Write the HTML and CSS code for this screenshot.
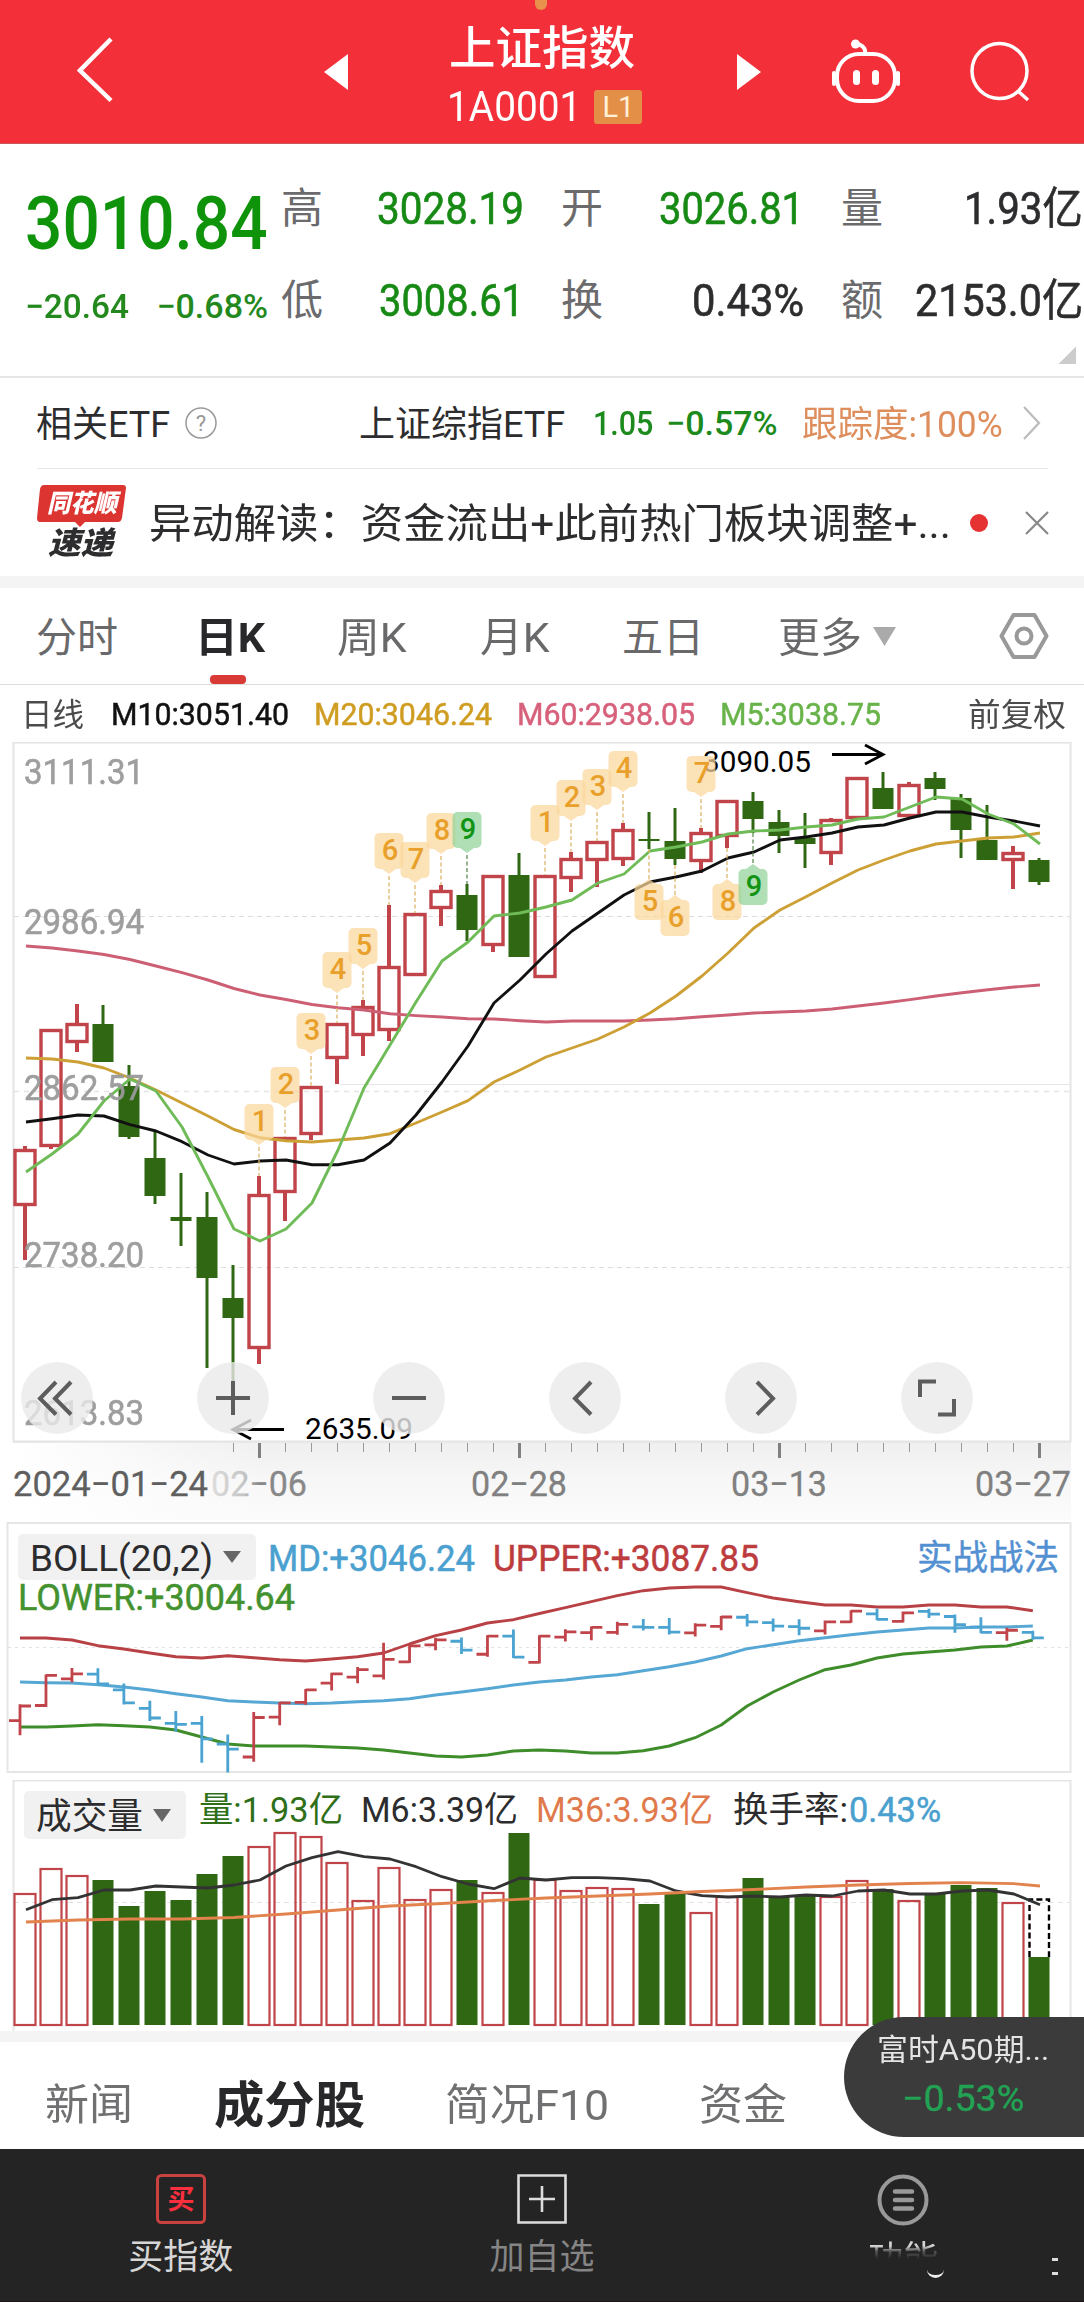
FILE: index.html
```html
<!DOCTYPE html>
<html lang="zh-CN">
<head>
<meta charset="utf-8">
<title>上证指数</title>
<link rel="stylesheet" href="styles.css">
</head>
<body>
<header class="top">
  <i class="drop"></i>
  <svg class="back" width="40" height="70" viewBox="0 0 40 70"><path d="M34 4 3 35.500l31 30" fill="none" stroke="#fff" stroke-width="4.500"/></svg>
  <svg width="24" height="36" viewBox="0 0 24 36"><path d="M24 0v36L0 18z" fill="#fff"/></svg>
  <div class="title">
    <h1 data-w="186">上证指数</h1>
    <div class="code"><span data-w="134">1A0001</span><b>L1</b></div>
  </div>
  <svg width="24" height="36" viewBox="0 0 24 36"><path d="M0 0v36l24-18z" fill="#fff"/></svg>
  <svg width="70" height="66" viewBox="0 0 70 66"><g fill="none" stroke="#fff" stroke-width="4" stroke-linecap="round"><path d="M34 15c1-5-2-9-8-10"/><rect x="6" y="15" width="58" height="47" rx="22"/><path d="M3 34v11M67 34v11"/></g><circle cx="24.500" cy="5" r="4.500" fill="#fff"/><rect x="22" y="31" width="7" height="15" rx="3.500" fill="#fff"/><rect x="41" y="31" width="7" height="15" rx="3.500" fill="#fff"/></svg>
  <svg width="62" height="62" viewBox="0 0 62 62"><g fill="none" stroke="#fff" stroke-width="3.500"><circle cx="30.500" cy="30" r="27.500"/><path d="m49 50 10 9"/></g></svg>
</header>

<section class="quote">
  <div class="last"><strong data-w="243">3010.84</strong><div class="chg"><span data-w="104">−20.64</span><span data-w="112">−0.68%</span></div></div>
  <div class="cell"><em>高</em><b class="g" data-w="147">3028.19</b></div>
  <div class="cell"><em>开</em><b class="g" data-w="145">3026.81</b></div>
  <div class="cell r"><em>量</em><b data-w="119">1.93亿</b></div>
  <div class="cell"><em>低</em><b class="g" data-w="145">3008.61</b></div>
  <div class="cell"><em>换</em><b data-w="112">0.43%</b></div>
  <div class="cell r"><em>额</em><b data-w="168">2153.0亿</b></div>
  <i class="corner"></i>
</section>

<section class="etf">
  <span data-w="134">相关ETF</span>
  <svg width="34" height="34" viewBox="0 0 34 34"><circle cx="17" cy="17" r="15" fill="none" stroke="#999" stroke-width="1.500"/><text x="17" y="25" text-anchor="middle" font-size="22" fill="#999">?</text></svg>
  <span data-w="206">上证综指ETF</span>
  <b data-w="60">1.05</b><b data-w="112">−0.57%</b>
  <span class="or" data-w="201">跟踪度:100%</span>
  <svg width="20" height="34" viewBox="0 0 20 34"><path d="m2 1 15 16L2 33" fill="none" stroke="#bbb" stroke-width="2.200"/></svg>
</section>

<section class="news">
  <div class="logo"><svg width="90" height="44" viewBox="0 0 90 44"><path d="M7 1h79q3 0 3 3l-4 30q-1 4-4 4H48l-5 5-5-5H3q-3 0-3-4L3 5q1-4 4-4z" fill="#dc3531"/></svg><b data-w="70">同花顺</b><strong data-w="65">速递</strong></div>
  <p data-w="802">异动解读：资金流出+此前热门板块调整+...</p>
  <i class="dot"></i>
  <svg width="26" height="26" viewBox="0 0 26 26"><path d="m2 2 22 22M24 2 2 24" stroke="#888" stroke-width="2.200"/></svg>
</section>

<nav class="periods">
  <span data-w="82">分时</span><span class="on"><span data-w="70">日K</span></span><span data-w="70">周K</span><span data-w="70">月K</span><span data-w="82">五日</span><span data-w="84">更多</span>
  <svg class="caret" width="23" height="19" viewBox="0 0 23 19"><path d="M0 0h23L11.500 19z" fill="#aaa"/></svg>
  <svg width="50" height="48" viewBox="0 0 50 48"><path d="M14.500 3h21L47.500 24l-12 21h-21L2.500 24z" fill="none" stroke="#999" stroke-width="4" stroke-linejoin="round"/><circle cx="25" cy="24" r="7.500" fill="none" stroke="#999" stroke-width="4"/></svg>
</nav>

<section class="ma">
  <span class="k" data-w="63">日线</span><span class="b" data-w="178">M10:3051.40</span><span class="y" data-w="178">M20:3046.24</span><span class="p" data-w="178">M60:2938.05</span><span class="n" data-w="161">M5:3038.75</span><span class="k" data-w="98">前复权</span>
</section>

<section class="kchart">
  <svg id="k" width="1084" height="780" viewBox="0 742 1084 780"></svg>
  <div class="tools">
    <button><svg viewBox="0 0 72 72"><path d="M35 20 19 36.500l16 16M50 20 34 36.500l16 16"/></svg></button>
    <button><svg viewBox="0 0 72 72"><path d="M19 36h34M36 19v34"/></svg></button>
    <button><svg viewBox="0 0 72 72"><path d="M19 36h34"/></svg></button>
    <button><svg viewBox="0 0 72 72"><path d="M42 20 26 36.500l16 16"/></svg></button>
    <button><svg viewBox="0 0 72 72"><path d="m32 20 16 16.500-16 16"/></svg></button>
    <button><svg viewBox="0 0 72 72"><path d="M19 35V19.500h16M53 37v15.500H37"/></svg></button>
  </div>
</section>
<svg id="boll" class="panel" width="1084" height="258" viewBox="0 1522 1084 258"></svg>
<svg id="vol" class="panel" width="1084" height="251" viewBox="0 1780 1084 251"></svg>

<nav class="info">
  <span data-w="88">新闻</span><span class="on" data-w="151">成分股</span><span data-w="164">简况F10</span><span data-w="88">资金</span>
  <aside><span data-w="172">富时A50期...</span><b data-w="122">−0.53%</b></aside>
</nav>
<footer>
  <div><svg width="50" height="50" viewBox="0 0 50 50"><rect x="1.500" y="1.500" width="47" height="47" rx="4" fill="none" stroke="#c9423f" stroke-width="3"/><text x="25" y="34.500" text-anchor="middle" font-size="27" font-weight="bold" fill="#fb2f3d">买</text></svg><span>买指数</span></div>
  <div><svg width="50" height="50" viewBox="0 0 50 50"><path d="M1.500 1.500h47v47h-47zM12 25h26M25 12v26" fill="none" stroke="#ddd" stroke-width="2.600"/></svg><span class="dim">加自选</span></div>
  <div class="fn"><svg width="52" height="52" viewBox="0 0 52 52"><circle cx="26" cy="26" r="23.500" fill="none" stroke="#999" stroke-width="4"/><path d="M18 17.500h17M18 26h17M18 34.500h17" stroke="#999" stroke-width="4.500" stroke-linecap="round"/></svg><span class="faded">功能</span><i class="arc"></i><i class="colon"></i></div>
</footer>
<script src="chart.js"></script>
</body>
</html>
```
FILE: styles.css
```css
* { box-sizing: border-box; }
body { margin: 0; width: 1084px; background: #fff; color: #2d2d2f; font-family: Roboto, "Noto Sans CJK SC", sans-serif; overflow-x: hidden; }
svg { display: block; flex: none; }
svg text { font-family: Roboto, "Noto Sans CJK SC", sans-serif; }
[data-w] { display: inline-block; white-space: nowrap; transform-origin: 0 50%; justify-self: start; }
em, i { font-style: normal; }

.top { position: relative; height: 144px; background: #f32f39; color: #fff; display: grid; grid-template-columns: 247px 123px 290px 94px 138px 80px; padding-left: 77px; align-items: center; border-bottom: 1px solid #c9545b; }
.back { margin-top: -4px; }
.drop { position: absolute; left: 535px; top: -12px; width: 12px; height: 22px; border-radius: 6px; background: #e8914d; }
.title { display: flex; flex-direction: column; padding-top: 5px; }
.title h1 { margin: -6px 0 0 2px; font-size: 46px; font-weight: 500; line-height: 66px; align-self: flex-start; }
.code { display: flex; align-items: center; height: 46px; padding-top: 6px; }
.code span { font-size: 42px; line-height: 46px; }
.code b { margin-left: 13px; width: 48px; height: 34px; background: #e38f47; border-radius: 3px; font-size: 29px; line-height: 35px; font-weight: 400; text-align: center; color: #fff0d8; }

.quote { position: relative; height: 234px; border-bottom: 2px solid #e6e6e6; overflow: hidden; padding-top: 19px; display: grid; grid-template-columns: 282px 280px 280px 242px; grid-template-rows: 92px 92px; }
.last { grid-row: 1 / 3; padding: 18px 0 0 25px; color: #0f930b; }
.last strong { font-size: 75px; line-height: 84px; font-weight: 500; }
.chg { display: flex; padding-top: 18px; justify-content: space-between; width: 243px; font-size: 34px; line-height: 46px; font-weight: 500; color: #23891d; }
.cell { display: grid; grid-template-columns: 60px minmax(0, 1fr); align-items: center; font-size: 44px; }
.cell em { color: #6b6b6d; font-size: 42px; padding-bottom: 10px; margin-left: -1px; }
.cell b { font-weight: 400; justify-self: end; -webkit-text-stroke: .6px; margin-right: 38px; }
.cell.r b { margin-right: 1px; padding-bottom: 8px; }
.cell .g { color: #178a15; }
.corner { position: absolute; right: 8px; top: 202px; width: 18px; height: 18px; background: linear-gradient(135deg, transparent 50%, #ccc 50%); }

.etf { height: 91px; margin: 0 36px 0 37px; border-bottom: 1px solid #e6e6e6; display: grid; grid-template-columns: 147px 176px 233px 73px 137px 219px 20px; align-items: center; font-size: 36px; }
.etf > span { padding-bottom: 4px; margin-left: -1px; }
.etf b { font-weight: 500; color: #1c8a1c; font-size: 34px; }
.etf .or { color: #de8e5c; }

.news { height: 119px; border-bottom: 12px solid #f4f4f4; padding-left: 37px; display: grid; grid-template-columns: 113px 820px 54px 26px; align-items: center; font-size: 41px; }
.news p { margin: 0 0 0 -1px; padding-bottom: 6px; }
.logo { position: relative; height: 78px; }
.logo b { position: absolute; left: 10px; top: 3px; color: #fff; font-size: 25px; line-height: 34px; font-style: italic; font-weight: 900; }
.logo strong { position: absolute; left: 11px; top: 40px; font-size: 31px; line-height: 40px; font-style: italic; font-weight: 900; }
.dot { width: 18px; height: 18px; border-radius: 50%; background: #e53232; }

.periods { height: 97px; border-bottom: 1px solid #ddd; padding-left: 36px; display: grid; grid-template-columns: 159px 142px 143px 142px 156px 95px 126px 50px; align-items: center; font-size: 41px; color: #69696b; }
.periods > span { padding-bottom: 4px; }
.periods .on { position: relative; color: #28282a; font-weight: 700; }
.periods .on::after { content: ""; position: absolute; left: 15px; bottom: -16px; width: 36px; height: 9px; border-radius: 4px; background: #d93a36; }

.ma { height: 57px; padding: 0 0 0 21px; display: grid; grid-template-columns: 90px 203px 203px 203px 248px 100px; align-items: center; font-size: 32px; }
.ma .k { color: #4b4b4d; padding-bottom: 3px; }
.ma .b, .ma .y, .ma .p, .ma .n { -webkit-text-stroke: .5px; }
.ma .b { color: #111; } .ma .y { color: #cf9d22; } .ma .p { color: #d7617b; } .ma .n { color: #69b34b; }

.kchart { position: relative; height: 780px; }
.tools { position: absolute; left: 21px; top: 620px; display: flex; gap: 104px; }
.tools button { width: 72px; height: 72px; border: 0; padding: 0; border-radius: 50%; background: rgba(234, 234, 234, .8); }
.tools path { fill: none; stroke: #5d5d5d; stroke-width: 4; }

.info { position: relative; height: 118px; border-top: 11px solid #f4f4f4; padding: 10px 0 0 45px; display: grid; grid-template-columns: 169px 231px 254px 100px; align-items: center; font-size: 43px; color: #707072; }
.info .on { font-size: 50px; font-weight: 700; color: #28282a; }
.info aside { position: absolute; left: 844px; top: -25px; width: 240px; height: 120px; border-radius: 60px 0 0 60px; background: #3b3b3b; color: #e4e4e4; font-size: 30px; display: grid; grid-template-rows: 48px 56px; justify-items: start; align-items: center; padding-top: 6px; padding-left: 33px; }
.info aside b { margin-left: 25px; font-size: 36px; font-weight: 400; color: #23a254; -webkit-text-stroke: .4px; }

footer { height: 153px; background: #242424; display: grid; grid-template-columns: repeat(3, 361.300px); border-bottom: 1px solid #1a0f13; }
footer div { position: relative; display: flex; flex-direction: column; align-items: center; padding-top: 25px; }
footer span { font-size: 35px; line-height: 50px; margin-top: 9px; color: #d6d6d6; }
footer .dim { color: #858585; }
footer .faded { -webkit-mask-image: linear-gradient(#000 11px, rgba(0, 0, 0, .3) 16px, transparent 24px); mask-image: linear-gradient(#000 11px, rgba(0, 0, 0, .3) 16px, transparent 24px); }
.arc { position: absolute; left: 204px; top: 120px; width: 17px; height: 9px; border-bottom: 3px solid #eee; border-radius: 0 0 9px 9px; filter: blur(.6px); }
.colon { position: absolute; left: 329px; top: 109px; width: 6px; height: 17px; border: solid #ddd; border-width: 3px 0; }
```
FILE: chart.js
```javascript
document.querySelectorAll('[data-w]').forEach(function (el) {
  var w = +el.dataset.w, m = el.offsetWidth, cs = getComputedStyle(el);
  if (cs.justifySelf === 'end') {
    el.style.transformOrigin = '100% 50%';
    el.style.marginLeft = (w - m) + 'px';
  } else {
    el.style.marginRight = (w - m) + 'px';
  }
  el.style.transform = 'scaleX(' + w / m + ')';
});

var RED = '#c0444a', GREEN = '#2f6713', BLUE = '#4aa3d0';

function rect(x, y, w, h, a) { return '<rect x="' + x + '" y="' + y + '" width="' + w + '" height="' + h + '" ' + a + '/>'; }
function path(d, c, w, a) { return '<path d="' + d + '" fill="none" stroke="' + c + '" stroke-width="' + w + '" ' + (a || '') + '/>'; }
function line(ys, x0, step, c, w) {
  return '<polyline fill="none" stroke-linejoin="round" stroke="' + c + '" stroke-width="' + w + '" points="' +
    ys.map(function (y, i) { return (x0 + step * i) + ',' + y; }).join(' ') + '"/>';
}
function text(s, x, y, w, size, c, a) {
  return '<text x="' + x + '" y="' + y + '" textLength="' + w + '" lengthAdjust="spacingAndGlyphs" font-size="' + size + '" fill="' + c + '" ' + (a || '') + '>' + s + '</text>';
}

// colour, high, body top, body bottom, low
var candles = [
  ['R',1146,1149,1206,1260],['R',1029,1029,1147,1149],['R',1004,1023,1043,1052],['G',1005,1024,1062,1062],['G',1065,1086,1137,1139],
  ['G',1132,1158,1196,1204],['G',1173,1217,1221,1246],['G',1192,1217,1278,1368],['G',1265,1298,1318,1406],['R',1176,1194,1349,1364],
  ['R',1137,1137,1193,1221],['R',1086,1086,1135,1140],['R',1023,1023,1059,1084],['R',1000,1006,1036,1056],['R',905,966,1031,1041],
  ['R',913,913,976,976],['R',885,890,909,926],['G',884,895,930,941],['R',875,875,946,952],['G',853,875,957,957],
  ['R',875,875,978,978],['R',852,858,879,892],['R',841,841,861,887],['R',823,829,860,866],['G',812,839,841,849],
  ['G',808,841,859,865],['R',828,832,862,873],['R',800,800,837,848],['G',792,801,819,833],['G',810,822,836,853],
  ['G',813,838,844,868],['R',818,819,854,865],['R',777,777,819,819],['G',772,788,809,809],['R',782,784,817,818],
  ['G',772,778,789,800],['G',794,798,830,858],['G',805,840,860,860],['R',846,852,861,889],['G',858,860,882,885]];
var m60 = [946,948,951,954.5,959.5,966,972.7,980,988.5,995,999.5,1004.5,1007.7,1010,1013.8,1015.6,1017,1018.8,1019,1020.7,1022,1021,1021,1021,1020,1018.7,1016.7,1015,1013,1012,1011,1009,1006,1003,999.6,996,992.7,989.7,987,985];
var m20 = [1058,1059,1062,1068,1078,1090,1103,1116,1129.5,1137.7,1140.7,1142,1140,1138,1133.7,1123,1112,1100.6,1082,1070,1057,1048,1039,1027,1013,996,976,953,928,910,896.7,883,870,860,851,844,841,838,837,833];
var m10 = [1122,1118.7,1115,1116,1124.7,1131,1141.7,1155,1164,1161,1160,1164.7,1164.7,1160,1143,1115,1082,1046,1003,980,954,931,913,895,882,877,871,858,852,840,837,833,827,825,818,812,812,817,821,826];
var m5 = [1172,1154,1134,1101,1079,1091,1127,1177,1229,1241,1229,1203,1150,1088,1045,1002,961,942,916,913,907,900,883,874,851,847,842,834,831,830,827,825,819,817,807,797,799,814,824,844];
// number, candle index, box top, points up
var flags = [[1,9,1104],[2,10,1067],[3,11,1013],[4,12,952],[5,13,928],[6,14,833],[7,15,842],[8,16,813],[9,17,812],
  [1,20,805],[2,21,780],[3,22,769],[4,23,751],[7,26,756],[5,24,884,1],[6,25,900,1],[8,27,884,1],[9,28,869,1]];

(function () {
  var s = '<defs><linearGradient id="ax" x2="0" y2="1"><stop offset="0" stop-color="#efefef"/><stop offset=".5" stop-color="#f7f7f7"/><stop offset="1" stop-color="#fbfbfb"/></linearGradient>' +
    '<linearGradient id="ae"><stop offset="0" stop-color="#fff"/><stop offset="1" stop-color="#fff" stop-opacity="0"/></linearGradient>' +
    '<linearGradient id="dt"><stop offset="0" stop-color="#ddd"/><stop offset=".35" stop-color="#c4c4c4"/><stop offset=".5" stop-color="#888"/></linearGradient></defs>';
  s += rect(13, 1442, 1058, 78, 'fill="url(#ax)"') + rect(13, 1443, 260, 78, 'fill="url(#ae)"');
  s += rect(13.5, 742.5, 1057, 699, 'fill="none" stroke="#e4e4e4" stroke-width="2"');
  s += path('M14 916.5H1070M14 1267.5H1070', '#dcdcdc', 1, 'stroke-dasharray="5 4"') + path('M14 1091.5H1070', '#e4e4e4', 1.5, 'stroke-dasharray="5 5"') + path('M340 1084.5H1070', '#e6e6e6', 1);
  candles.forEach(function (c, i) {
    var x = 25 + 26 * i, col = c[0] === 'R' ? RED : GREEN, w = c[0] === 'R' ? 4 : 3;
    if (c[1] < c[2]) s += path('M' + x + ' ' + c[1] + 'V' + c[2], col, w);
    if (c[4] > c[3]) s += path('M' + x + ' ' + c[3] + 'V' + c[4], col, w);
    s += c[0] === 'R' ? rect(x - 10, c[2] + 1.5, 20, c[3] - c[2] - 3, 'fill="none" stroke="' + RED + '" stroke-width="3.4"')
                      : rect(x - 10.5, c[2], 21, c[3] - c[2], 'fill="' + GREEN + '"');
  });
  s += line(m60, 26, 26, '#cc5f74', 2.9) + line(m20, 26, 26, '#cda035', 2.9) + line(m10, 26, 26, '#111', 2.9) + line(m5, 26, 26, '#6fbb57', 2.9);
  [['3111.31',784],['2986.94',934],['2862.57',1099.5],['2738.20',1267],['2613.83',1424.5]].forEach(function (l) {
    s += text(l[0], 24, l[1], 120, 35, '#999', 'opacity=".95" stroke="#999" stroke-width=".6"');
  });
  s += text('3090.05', 703, 772, 108, 30, '#000') + path('M832 754.5H882M865 745l18 9.5-18 9.500', '#000', 2.8);
  s += text('2635.09', 305, 1439, 108, 30, '#000') + path('M284 1429.5H234M251 1420l-18 9.500 18 9.500', '#000', 2.8);
  flags.forEach(function (f) {
    var x = 25 + 26 * f[1], y = f[2], g = f[0] === 9, c = candles[f[1]];
    var tri = f[3] ? 'M' + (x - 7) + ' ' + y + 'l7-5 7 5z' : 'M' + (x - 7) + ' ' + (y + 36) + 'l7 5 7-5z';
    s += path(f[3] ? 'M' + x + ' ' + c[4] + 'V' + (y - 4) : 'M' + x + ' ' + (y + 43) + 'V' + c[1], g ? '#5e8f55' : '#dfb66c', 1.3, 'stroke-dasharray="4 2.500"');
    s += '<g opacity=".72" fill="' + (g ? '#93d49b' : '#fcd79c') + '">' + rect(x - 14.5, y, 29, 36, 'rx="5"') + '<path d="' + tri + '"/></g>';
    s += '<text x="' + (x + 1) + '" y="' + (y + 27) + '" text-anchor="middle" font-size="29" font-weight="500" fill="' + (g ? '#119414' : '#e9a02b') + '">' + f[0] + '</text>';
  });
  for (var i = 8; i < 40; i++) {
    var tx = 25.5 + 26 * i, major = i % 10 === 9;
    s += path('M' + tx + ' 1443V' + (major ? 1458 : 1452), major ? '#808080' : '#999', major ? 3 : 1);
  }
  s += text('2024−01−24', 13, 1496, 195, 35, '#5f5f5f', 'stroke="#5f5f5f" stroke-width=".3"');
  [['02−06',211,'url(#dt)'],['02−28',471,'#808080'],['03−13',731,'#808080'],['03−27',975,'#808080']].forEach(function (d) {
    s += text(d[0], d[1], 1496, 96, 35, d[2], 'stroke="' + d[2] + '" stroke-width=".3"');
  });
  document.getElementById('k').innerHTML = s;
})();

(function () {
  var up = [1638,1638,1640,1645.7,1649,1653,1656.7,1658,1655.7,1657.7,1659.7,1661,1659,1656.7,1653,1644,1635.7,1630,1623,1619.7,1613.5,1607.7,1601.7,1595.7,1590.7,1588,1587,1587,1592.7,1598,1601.7,1605,1605,1607,1607,1605,1605,1607,1607,1610.7];
  var md = [1682,1682.7,1683,1684.7,1687,1690,1693.7,1697,1700.7,1702,1703,1703.7,1703,1701.7,1700.7,1698.7,1695,1692,1688.7,1685,1682,1680,1677,1674.7,1670.7,1666.7,1662,1656,1648.7,1644.7,1640.7,1637.7,1634.7,1632,1630,1628,1628,1627,1627,1626];
  var lo = [1727,1727,1726,1724.7,1725.7,1727,1730,1737,1744,1746,1746,1746,1747,1748,1750,1753,1756,1757,1755,1751,1750,1751,1753,1753,1750.7,1746,1737.7,1725,1706,1692,1680,1669.7,1665,1658,1654,1652,1650,1647,1646,1640];
  var s = rect(7.5, 1523, 1063, 249, 'fill="#fff" stroke="#e6e6e6" stroke-width="2"') + path('M8 1647.5H1068', '#e2e2e2', 1, 'stroke-dasharray="3 4"');
  s += rect(18, 1534, 238, 46, 'rx="5" fill="#f1f1f1"') + '<path d="M223 1551h18l-9 12z" fill="#666"/>';
  s += text('BOLL(20,2)', 30, 1571, 183, 36, '#2c2c2e') + text('MD:+3046.24', 268, 1571, 207, 36, '#4aa0cf', 'stroke="#4aa0cf" stroke-width=".5"');
  s += text('UPPER:+3087.85', 493, 1571, 266, 36, '#bd3c3e', 'stroke="#bd3c3e" stroke-width=".5"') + text('LOWER:+3004.64', 18, 1610, 277, 36, '#44922f', 'stroke="#44922f" stroke-width=".5"');
  s += text('实战战法', 917, 1570, 142, 35, '#5290d2', 'stroke="#5290d2" stroke-width=".4"');
  s += line(up, 20, 25.97, '#b84145', 2.9) + line(md, 20, 25.97, '#56a7d3', 2.9) + line(lo, 20, 25.97, '#3e8c2a', 2.9);
  function by(y) { return 1706 + (y - 1149) * .255; }
  candles.forEach(function (c, i) {
    var x = 20 + 25.97 * i, r = c[0] === 'R', o = by(r ? c[3] : c[2]), e = by(r ? c[2] : c[3]);
    s += path('M' + x + ' ' + (by(c[1]) - 1) + 'V' + (by(c[4]) + 1) + 'M' + (x - 11) + ' ' + o + 'H' + x + 'M' + x + ' ' + e + 'h11', r ? RED : BLUE, 2.8);
  });
  document.getElementById('boll').innerHTML = s;
})();

(function () {
  var tops = [1893,1868,1875,1880,1906,1891,1900,1874,1856,1846,1832,1836,1862,1900,1867,1899,1889,1880,1892,1833,1879,1890,1887,1888,1904,1893,1912,1896,1878,1897,1896,1896,1880,1889,1900,1894,1885,1888,1902,1957];
  var m6 = [1909.7,1899.7,1897.7,1890,1890,1886,1887,1888,1885,1880,1866,1857.7,1851.7,1856.7,1859,1866.7,1876.7,1884,1888.7,1878,1880,1877.7,1877.7,1878.7,1881,1891,1895.7,1897,1896,1897,1895,1896,1891,1890,1894,1894,1891,1890,1894,1904.7];
  var m36 = [1922,1920,1919,1919,1917.5,1914,1910,1906,1903.5,1900.5,1898,1896,1894,1891.5,1889.5,1887,1885,1883.5,1882.7,1883.7];
  var s = path('M13.5 2031V1780.5H1070.5V2031', '#e6e6e6', 2) + path('M14 1902.500H1070', '#e2e2e2', 1, 'stroke-dasharray="5 4"');
  s += rect(24, 1791, 162, 48, 'rx="5" fill="#f1f1f1"') + '<path d="M153 1809h18l-9 13z" fill="#666"/>';
  s += text('成交量', 36, 1829, 107, 36, '#2c2c2e') + text('量:1.93亿', 199, 1822, 144, 35, '#2f6f17') + text('M6:3.39亿', 361, 1822, 157, 35, '#2c2c2e');
  s += text('M36:3.93亿', 536, 1822, 177, 35, '#e07a4c') + text('换手率:', 733, 1822, 115, 35, '#2c2c2e') + text('0.43%', 849, 1822, 92, 35, '#4aa0cf', 'stroke="#4aa0cf" stroke-width=".5"');
  tops.forEach(function (t, i) {
    var x = 25 + 26 * i;
    s += candles[i][0] === 'R' ? rect(x - 10.5, t + 1, 21, 2024 - t, 'fill="none" stroke="' + RED + '" stroke-width="2.2"')
                              : rect(x - 10.5, t, 21, 2025 - t, 'fill="' + GREEN + '"');
  });
  s += path('M1029.500 1957V1899.500H1049V1957', '#000', 2.4, 'stroke-dasharray="6 3.200"');
  s += line(m6, 26, 26, '#333', 2.8) + line(m36, 26, 52, '#e2824c', 2.8) + path('M1014 1883.7L1040 1886', '#e2824c', 2.8);
  document.getElementById('vol').innerHTML = s;
})();
```
